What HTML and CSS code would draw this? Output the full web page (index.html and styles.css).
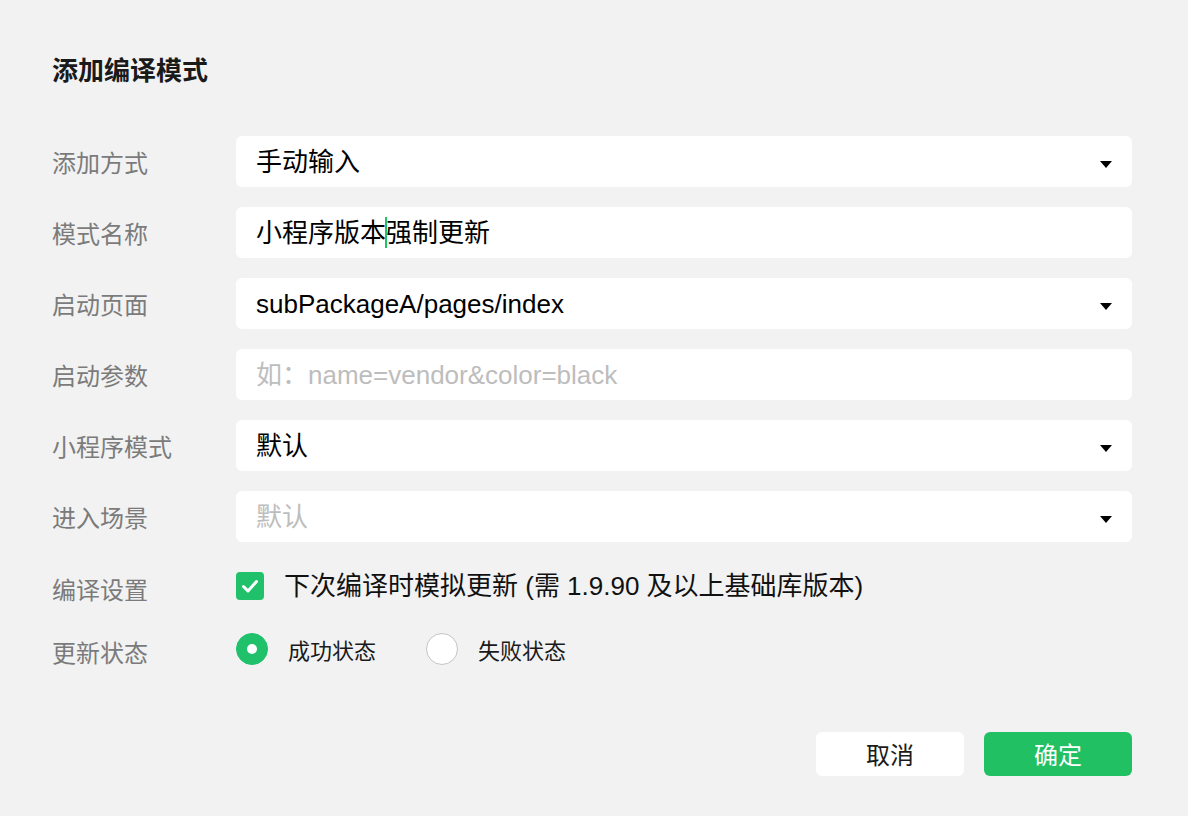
FILE: index.html
```html
<!DOCTYPE html>
<html lang="zh-CN">
<head>
<meta charset="utf-8">
<title>添加编译模式</title>
<link rel="stylesheet" href="styles.css">
</head>
<body>
<div class="dialog">
  <h1 class="title">添加编译模式</h1>
  <div class="form">
    <div class="row">
      <div class="label">添加方式</div>
      <div class="field select"><span class="value">手动输入</span><span class="arrow"></span></div>
    </div>
    <div class="row">
      <div class="label">模式名称</div>
      <div class="field"><span class="value">小程序版本<span class="caret"></span>强制更新</span></div>
    </div>
    <div class="row">
      <div class="label">启动页面</div>
      <div class="field select"><span class="value">subPackageA/pages/index</span><span class="arrow"></span></div>
    </div>
    <div class="row">
      <div class="label">启动参数</div>
      <div class="field"><span class="value placeholder">如：name=vendor&amp;color=black</span></div>
    </div>
    <div class="row">
      <div class="label">小程序模式</div>
      <div class="field select"><span class="value">默认</span><span class="arrow"></span></div>
    </div>
    <div class="row">
      <div class="label">进入场景</div>
      <div class="field select"><span class="value placeholder">默认</span><span class="arrow"></span></div>
    </div>
    <div class="row row-check">
      <div class="label label-low">编译设置</div>
      <label class="check">
        <span class="box"><svg width="28" height="28" viewBox="0 0 28 28"><path d="M7.5 14.5 L12 19 L20.5 9.5" fill="none" stroke="#fff" stroke-width="3" stroke-linecap="round" stroke-linejoin="round"/></svg></span>
        <span class="check-text">下次编译时模拟更新 (需 1.9.90 及以上基础库版本)</span>
      </label>
    </div>
    <div class="row row-radio">
      <div class="label label-low">更新状态</div>
      <div class="radios">
        <span class="radio on"></span><span class="radio-text">成功状态</span>
        <span class="radio"></span><span class="radio-text">失败状态</span>
      </div>
    </div>
  </div>
  <div class="actions">
    <button class="btn">取消</button>
    <button class="btn primary">确定</button>
  </div>
</div>
</body>
</html>
```
FILE: styles.css
```css
html, body {
  margin: 0;
  padding: 0;
  background: #f2f2f2;
}
body {
  font-family: "Liberation Sans", "Noto Sans CJK SC", sans-serif;
  color: #1a1a1a;
}
.dialog {
  padding: 51px 56px 0 52px;
}
.title {
  margin: 0 0 49px 0;
  font-size: 26px;
  line-height: 36px;
  font-weight: 700;
  color: #1a1a1a;
  font-family: "Noto Sans CJK SC", sans-serif;
}
.form {
  display: flex;
  flex-direction: column;
}
.row {
  display: flex;
  align-items: center;
  margin-bottom: 20px;
}
.label {
  width: 184px;
  flex: none;
  font-size: 24px;
  line-height: 32px;
  color: #7b7b7b;
  font-family: "Noto Sans CJK SC", sans-serif;
}
.label-low {
  padding-top: 6px;
}
.field {
  flex: 1;
  height: 51px;
  background: #fff;
  border-radius: 6px;
  display: flex;
  align-items: center;
  padding: 0 20px;
  box-sizing: border-box;
}
.value {
  flex: 1;
  font-size: 26px;
  line-height: 36px;
  color: #000;
  white-space: nowrap;
}
.placeholder {
  color: #bdbdbd;
}
.caret {
  display: inline-block;
  width: 2px;
  height: 31px;
  background: #1ec464;
  vertical-align: middle;
  margin: 0 -1px;
  position: relative;
  top: -2px;
}
.arrow {
  width: 0;
  height: 0;
  border-left: 6px solid transparent;
  border-right: 6px solid transparent;
  border-top: 7px solid #000;
  margin-top: 5px;
}
.row-check {
  margin-top: 5px;
  margin-bottom: 25px;
}
.check {
  display: flex;
  align-items: center;
}
.box {
  width: 28px;
  height: 28px;
  border-radius: 4px;
  background: #21c16b;
  display: block;
  margin-right: 20px;
}
.box svg {
  display: block;
}
.check-text {
  font-size: 26px;
  line-height: 36px;
  color: #111;
}
.radios {
  display: flex;
  align-items: center;
}
.radio {
  width: 32px;
  height: 32px;
  border-radius: 50%;
  box-sizing: border-box;
  border: 1px solid #c4c4c4;
  background: #fff;
  margin-right: 20px;
  position: relative;
}
.radio.on {
  background: #21c16b;
  border-color: #21c16b;
}
.radio.on::after {
  content: "";
  position: absolute;
  left: 10px;
  top: 10px;
  width: 10px;
  height: 10px;
  border-radius: 50%;
  background: #fff;
}
.radio-text {
  font-size: 22px;
  line-height: 32px;
  color: #1a1a1a;
  margin-right: 50px;
  font-family: "Noto Sans CJK SC", sans-serif;
}
.actions {
  display: flex;
  justify-content: flex-end;
  gap: 20px;
  margin-top: 44px;
}
.btn {
  width: 148px;
  height: 44px;
  border: none;
  border-radius: 6px;
  background: #fff;
  color: #1a1a1a;
  font-size: 24px;
  font-family: "Noto Sans CJK SC", sans-serif;
  padding: 0;
  line-height: 44px;
}
.btn.primary {
  background: #21c063;
  color: #fff;
}
```
